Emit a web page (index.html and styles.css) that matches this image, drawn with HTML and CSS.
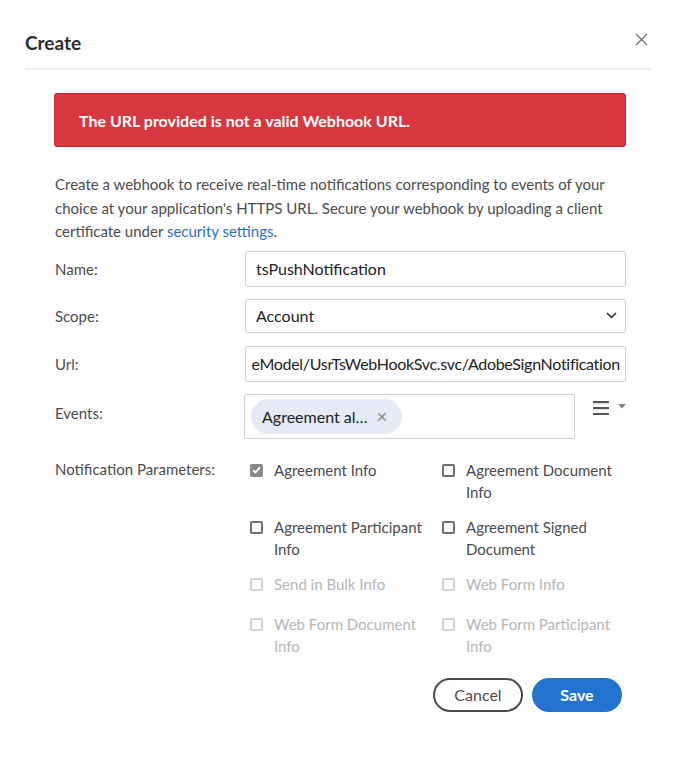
FILE: index.html
```html
<!DOCTYPE html>
<html lang="en">
<head>
<meta charset="utf-8">
<title>Create</title>
<link rel="stylesheet" href="styles.css">
</head>
<body>
<div class="dialog">
  <div class="header">
    <h1 class="title">Create</h1>
    <button class="close" aria-label="Close">
      <svg width="13" height="13" viewBox="0 0 13 13"><path d="M1 1L12 12M12 1L1 12" stroke="#707070" stroke-width="1.3" fill="none"/></svg>
    </button>
  </div>
  <div class="content">
    <div class="alert">The URL provided is not a valid Webhook URL.</div>
    <p class="intro">Create a webhook to receive real-time notifications corresponding to events of your choice at your application's HTTPS URL. Secure your webhook by uploading a client certificate under <a href="#" class="link">security settings</a>.</p>

    <div class="row">
      <label class="label">Name:</label>
      <div class="field input">tsPushNotification</div>
    </div>
    <div class="row row-scope">
      <label class="label">Scope:</label>
      <div class="field select">
        <span>Account</span>
        <svg width="11" height="7" viewBox="0 0 11 7"><path d="M1 1L5.5 5.5L10 1" stroke="#222" stroke-width="1.5" fill="none"/></svg>
      </div>
    </div>
    <div class="row">
      <label class="label">Url:</label>
      <div class="field input url"><span>eModel/UsrTsWebHookSvc.svc/AdobeSignNotification</span></div>
    </div>
    <div class="row events-row">
      <label class="label">Events:</label>
      <div class="events-box">
        <span class="chip">Agreement al… <span class="chip-x">✕</span></span>
      </div>
      <div class="menu-btn">
        <svg width="16" height="15" viewBox="0 0 16 15"><rect x="0" y="1" width="16" height="2.2" fill="#555"/><rect x="0" y="7" width="16" height="2.2" fill="#555"/><rect x="0" y="13" width="16" height="2.2" fill="#555"/></svg>
        <svg width="8" height="5" viewBox="0 0 8 5"><path d="M0 0H8L4 4.5Z" fill="#808080"/></svg>
      </div>
    </div>

    <div class="params">
      <div class="label params-label">Notification Parameters:</div>
      <div class="checks">
        <div class="check"><span class="box checked"><svg width="9" height="8" viewBox="0 0 9 8"><path d="M1 4.2L3.4 6.4L8 1.4" stroke="#fff" stroke-width="1.8" fill="none"/></svg></span><span class="check-text">Agreement Info</span></div>
        <div class="check"><span class="box"></span><span class="check-text">Agreement Document Info</span></div>
        <div class="check"><span class="box"></span><span class="check-text">Agreement Participant Info</span></div>
        <div class="check"><span class="box"></span><span class="check-text">Agreement Signed Document</span></div>
        <div class="check disabled short"><span class="box"></span><span class="check-text">Send in Bulk Info</span></div>
        <div class="check disabled short"><span class="box"></span><span class="check-text">Web Form Info</span></div>
        <div class="check disabled"><span class="box"></span><span class="check-text">Web Form Document Info</span></div>
        <div class="check disabled"><span class="box"></span><span class="check-text">Web Form Participant Info</span></div>
      </div>
    </div>

    <div class="footer">
      <button class="btn cancel">Cancel</button>
      <button class="btn save">Save</button>
    </div>
  </div>
</div>
</body>
</html>
```

FILE: styles.css
```css
* { box-sizing: border-box; }
html, body {
  margin: 0;
  padding: 0;
  background: #fff;
}
body {
  font-family: Lato, "Open Sans", "Liberation Sans", sans-serif;
  color: #4b4b4b;
  width: 679px;
  height: 771px;
  overflow: hidden;
}
.dialog {
  width: 679px;
  height: 771px;
  background: #fff;
}
.header {
  margin: 0 29px 0 25px;
  padding-top: 16px;
  height: 70px;
  display: flex;
  align-items: center;
  justify-content: space-between;
  border-bottom: 2px solid #ececec;
}
.title {
  margin: 0;
  font-size: 19px;
  font-weight: 700;
  color: #2c2c2c;
  line-height: 24px;
  padding-top: 1px;
}
.close {
  border: 0;
  background: none;
  padding: 0;
  margin-right: 2px;
  display: flex;
  margin-bottom: 6px;
}
.content {
  padding: 23px 53px 0 54px;
}
.alert {
  height: 54px;
  background: #d7373f;
  border: 1px solid #c4262e;
  border-radius: 3px;
  color: #fff;
  font-size: 16px;
  font-weight: 700;
  display: flex;
  align-items: center;
  padding-left: 24px;
}
.intro {
  margin: 26px 0 7px 1px;
  font-size: 15px;
  line-height: 23.5px;
  color: #4b4b4b;
}
.link {
  color: #2b6fc2;
  text-decoration: none;
}
.row {
  display: flex;
  align-items: center;
  margin-bottom: 12px;
}
.row-scope {
  margin-bottom: 13px;
}
.label {
  width: 191px;
  flex: none;
  padding-left: 1px;
  font-size: 15px;
  color: #4b4b4b;
}
.field {
  flex: 1;
  height: 36px;
  border: 1px solid #cfcfcf;
  border-radius: 3px;
  background: #fff;
  font-size: 16px;
  color: #222;
  display: flex;
  align-items: center;
  padding: 0 10px;
}
.select {
  height: 34px;
  justify-content: space-between;
  padding-right: 8px;
}
.url {
  justify-content: flex-end;
  overflow: hidden;
  white-space: nowrap;
  letter-spacing: -0.3px;
  padding: 0 5px 0 6px;
}
.events-row {
  align-items: flex-start;
  margin-bottom: 20px;
}
.events-row .label {
  padding-top: 10px;
  width: 190px;
}
.events-box {
  width: 336px;
  height: 45px;
  border: 1px solid #cfcfcf;
  border-radius: 2px;
  padding: 4px 6px;
  display: flex;
  align-items: center;
}
.chip {
  height: 35px;
  padding: 0 14px 0 11px;
  border-radius: 18px;
  background: #e4ebf6;
  color: #222;
  font-size: 16px;
  display: inline-flex;
  align-items: center;
  white-space: nowrap;
}
.chip-x {
  color: #8a8a8a;
  font-size: 14px;
  margin-left: 8px;
}
.menu-btn {
  margin-left: 18px;
  padding-top: 6px;
  display: flex;
  align-items: flex-start;
  gap: 9px;
}
.menu-btn svg:last-child {
  margin-top: 4px;
}
.params {
  display: flex;
  align-items: flex-start;
}
.params-label {
  padding-top: 1px;
}
.checks {
  display: grid;
  grid-template-columns: 192px 184px;
  row-gap: 12px;
  padding-left: 5px;
}
.check {
  display: flex;
  align-items: flex-start;
  font-size: 15px;
  line-height: 22.5px;
  color: #4b4b4b;
  padding-right: 10px;
}
.check.short {
  min-height: 28px;
}
.box {
  flex: none;
  width: 13px;
  height: 13px;
  border: 2px solid #6e6e6e;
  border-radius: 2px;
  margin-top: 5px;
  margin-right: 11px;
  display: flex;
  align-items: center;
  justify-content: center;
}
.box.checked {
  background: #8a8a8a;
  border-color: #8a8a8a;
}
.check.disabled {
  color: #b5b5b5;
}
.check.disabled .box {
  border-color: #d3d3d3;
}
.footer {
  display: flex;
  justify-content: flex-end;
  gap: 9px;
  margin-top: 20px;
  padding-right: 4px;
}
.btn {
  width: 90px;
  height: 34px;
  border-radius: 17px;
  font-family: Lato, "Open Sans", "Liberation Sans", sans-serif;
  font-size: 16px;
  cursor: pointer;
}
.cancel {
  background: #fff;
  border: 2px solid #4b4b4b;
  color: #4b4b4b;
}
.save {
  background: #2272cf;
  border: 0;
  color: #fff;
  font-weight: 700;
}
```
